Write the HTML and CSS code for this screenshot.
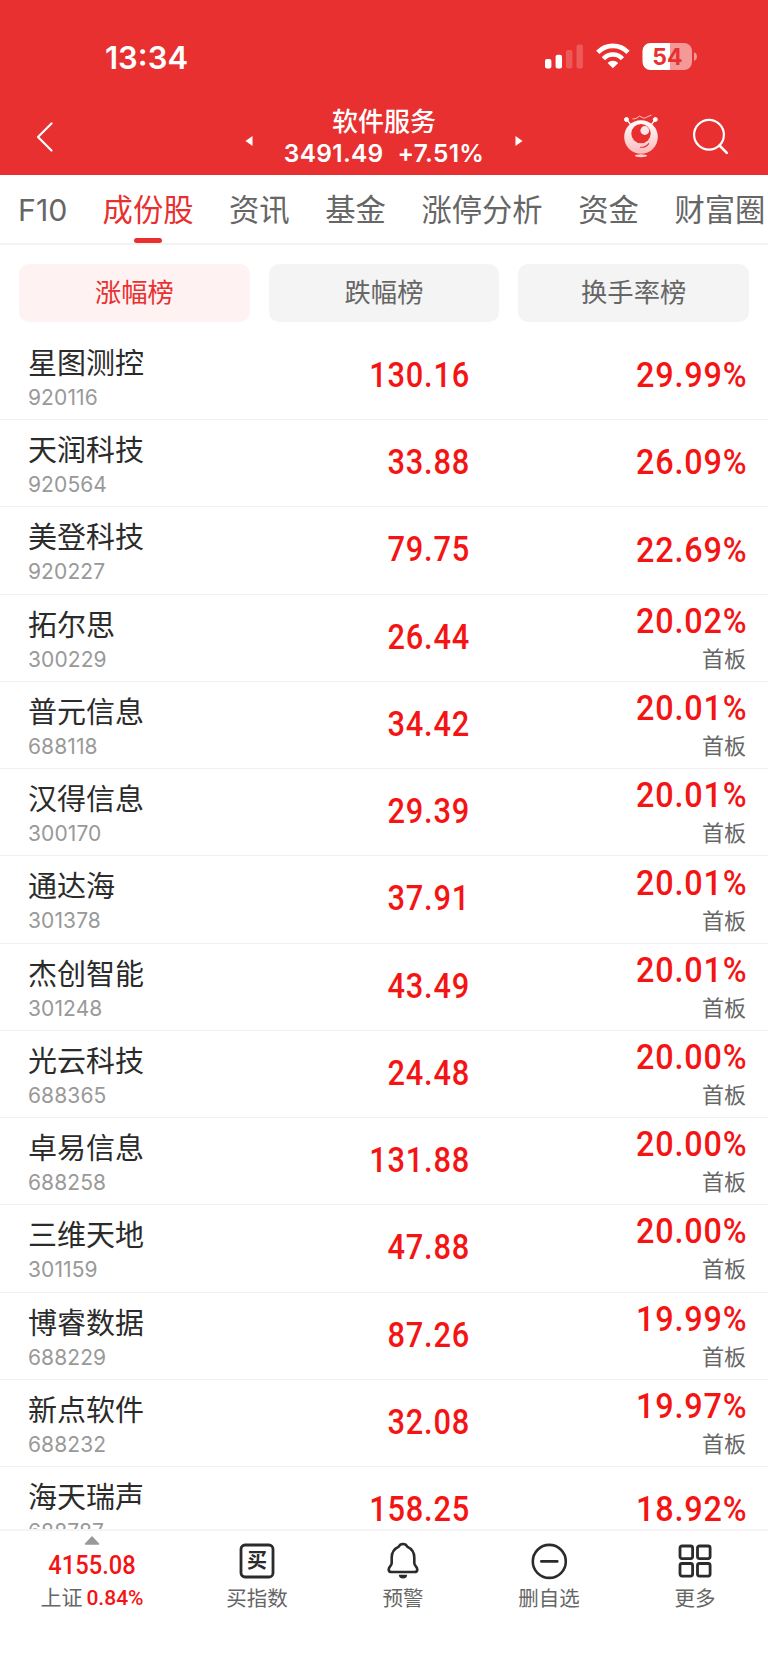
FILE: index.html
```
<!DOCTYPE html>
<html lang="zh-CN">
<head>
<meta charset="utf-8">
<title>软件服务</title>
<link rel="stylesheet" href="styles.css">
</head>
<body>
<div class="app">
  <header class="header">
    <div class="status">
      <span class="clock">13:34</span>
      <svg class="status-icons" width="154" height="30" viewBox="0 0 154 30">
        <rect x="1" y="17" width="6.4" height="9.4" rx="2" fill="#fff"/>
        <rect x="11.6" y="12.8" width="6.4" height="13.6" rx="2" fill="#fff"/>
        <rect x="22" y="8" width="6.4" height="18.4" rx="2" fill="#fff" opacity=".2"/>
        <rect x="32.5" y="2.6" width="6.4" height="23.8" rx="2" fill="#fff" opacity=".2"/>
        <g fill="none" stroke="#fff" stroke-width="4.6">
          <path d="M53.800 10.300a21 21 0 0 1 30.200 0"/>
          <path d="M59.400 16.700a13 13 0 0 1 19 0"/>
        </g>
        <path d="M68.900 26.300 63.600 21a7.600 7.600 0 0 1 10.600 0z" fill="#fff"/>
        <path d="M108 1h-1.5a8 8 0 0 0-8 8v11a8 8 0 0 0 8 8H126V1z" fill="#fff"/>
        <path d="M126 1h14a8 8 0 0 1 8 8v11a8 8 0 0 1-8 8h-14z" fill="#fff" opacity=".5"/>
        <path d="M150 10.3a4.6 4.6 0 0 1 0 8.6z" fill="#fff" opacity=".5"/>
        <text class="battery" x="123.500" y="22.700" text-anchor="middle">54</text>
      </svg>
    </div>
    <div class="nav">
      <svg class="back" width="20" height="32" viewBox="0 0 20 32"><path d="M16.500 2.500 3 16l13.500 13.500" fill="none" stroke="#fff" stroke-width="2.200" stroke-linecap="round" stroke-linejoin="round"/></svg>
      <svg class="prev" width="8" height="12" viewBox="0 0 8 12"><path d="M7.500 1v10L.5 6z" fill="#fff"/></svg>
      <div class="title">
        <div class="title-name">软件服务</div>
        <div class="title-quote"><span>3491.49</span><span>+7.51%</span></div>
      </div>
      <svg class="next" width="8" height="12" viewBox="0 0 8 12"><path d="M.5 1v10l7-5z" fill="#fff"/></svg>
      <svg class="mascot" width="36" height="44" viewBox="0 0 36 44">
        <defs><linearGradient id="skin" x1="0" y1="0" x2="0" y2="1"><stop offset="0" stop-color="#fff"/><stop offset="1" stop-color="#fdb9bc"/></linearGradient></defs>
        <g stroke="#fff" fill="#fff"><path d="M4 6l4 5M32 6l-4 5" stroke-width="1.300"/><circle cx="3.500" cy="5.500" r="2"/><circle cx="32.300" cy="5.500" r="2"/></g>
        <path d="M9.500 5l3.500-.5 3.500-2.500 4.500 2.300 7.500-3.300" fill="none" stroke="#fbb" stroke-width="1"/>
        <circle cx="18" cy="23" r="16.800" fill="url(#skin)"/>
        <circle cx="18" cy="19.600" r="9.700" fill="#e83030"/>
        <circle cx="21.800" cy="16.500" r="4.400" fill="#ffe6e6"/>
        <path d="M17.500 33.200q5 .8 8.200-3.600" fill="none" stroke="#e83030" stroke-width="1.100" stroke-linecap="round"/>
        <ellipse cx="18" cy="41.700" rx="6.200" ry="1.500" fill="#ffd0d0"/>
      </svg>
      <svg class="search" width="38" height="38" viewBox="0 0 38 38"><circle cx="17" cy="16.700" r="14.900" fill="none" stroke="#fff" stroke-width="2.200"/><path d="M27.500 27.500l7.300 7.300" stroke="#fff" stroke-width="2.600" stroke-linecap="round"/></svg>
    </div>
  </header>

  <nav class="tabs">
    <span class="tab tab-latin">F10</span>
    <span class="tab tab-active">成份股</span>
    <span class="tab">资讯</span>
    <span class="tab">基金</span>
    <span class="tab">涨停分析</span>
    <span class="tab">资金</span>
    <span class="tab">财富圈</span>
  </nav>

  <div class="filters">
    <div class="filter filter-active">涨幅榜</div>
    <div class="filter">跌幅榜</div>
    <div class="filter">换手率榜</div>
  </div>

  <main class="list">
    <div class="row"><div class="stock"><div class="name">星图测控</div><div class="code">920116</div></div><div class="price">130.16</div><div class="change"><div class="pct">29.99%</div></div></div>
    <div class="row"><div class="stock"><div class="name">天润科技</div><div class="code">920564</div></div><div class="price">33.88</div><div class="change"><div class="pct">26.09%</div></div></div>
    <div class="row"><div class="stock"><div class="name">美登科技</div><div class="code">920227</div></div><div class="price">79.75</div><div class="change"><div class="pct">22.69%</div></div></div>
    <div class="row"><div class="stock"><div class="name">拓尔思</div><div class="code">300229</div></div><div class="price">26.44</div><div class="change"><div class="pct">20.02%</div><div class="tag">首板</div></div></div>
    <div class="row"><div class="stock"><div class="name">普元信息</div><div class="code">688118</div></div><div class="price">34.42</div><div class="change"><div class="pct">20.01%</div><div class="tag">首板</div></div></div>
    <div class="row"><div class="stock"><div class="name">汉得信息</div><div class="code">300170</div></div><div class="price">29.39</div><div class="change"><div class="pct">20.01%</div><div class="tag">首板</div></div></div>
    <div class="row"><div class="stock"><div class="name">通达海</div><div class="code">301378</div></div><div class="price">37.91</div><div class="change"><div class="pct">20.01%</div><div class="tag">首板</div></div></div>
    <div class="row"><div class="stock"><div class="name">杰创智能</div><div class="code">301248</div></div><div class="price">43.49</div><div class="change"><div class="pct">20.01%</div><div class="tag">首板</div></div></div>
    <div class="row"><div class="stock"><div class="name">光云科技</div><div class="code">688365</div></div><div class="price">24.48</div><div class="change"><div class="pct">20.00%</div><div class="tag">首板</div></div></div>
    <div class="row"><div class="stock"><div class="name">卓易信息</div><div class="code">688258</div></div><div class="price">131.88</div><div class="change"><div class="pct">20.00%</div><div class="tag">首板</div></div></div>
    <div class="row"><div class="stock"><div class="name">三维天地</div><div class="code">301159</div></div><div class="price">47.88</div><div class="change"><div class="pct">20.00%</div><div class="tag">首板</div></div></div>
    <div class="row"><div class="stock"><div class="name">博睿数据</div><div class="code">688229</div></div><div class="price">87.26</div><div class="change"><div class="pct">19.99%</div><div class="tag">首板</div></div></div>
    <div class="row"><div class="stock"><div class="name">新点软件</div><div class="code">688232</div></div><div class="price">32.08</div><div class="change"><div class="pct">19.97%</div><div class="tag">首板</div></div></div>
    <div class="row"><div class="stock"><div class="name">海天瑞声</div><div class="code">688787</div></div><div class="price">158.25</div><div class="change"><div class="pct">18.92%</div></div></div>
  </main>

  <footer class="bar">
    <div class="index">
      <svg width="16" height="9" viewBox="0 0 16 9"><path d="M8 1l6.500 7h-13z" fill="#999" stroke="#999" stroke-width="1.500" stroke-linejoin="round"/></svg>
      <div class="index-value">4155.08</div>
      <div class="index-line"><span>上证</span><span class="index-pct">0.84%</span></div>
    </div>
    <div class="action">
      <svg width="38" height="38" viewBox="0 0 38 38"><rect x="3" y="3" width="32" height="32" rx="4" fill="none" stroke="#2b2b2b" stroke-width="2.800"/><text class="buy" x="19" y="26" text-anchor="middle">买</text></svg>
      <span>买指数</span>
    </div>
    <div class="action">
      <svg width="38" height="38" viewBox="0 0 38 38"><path d="M19 2c-2.200 0-3.500 1-4.200 2.600C10.500 6.600 7.700 10.500 7.700 15.500V21c0 3-3 3.800-3 6.400 0 1.900 1.300 2.600 3 2.600h22.600c1.700 0 3-.7 3-2.600 0-2.600-3-3.400-3-6.400v-5.500c0-5-2.800-8.900-7.100-10.900C22.500 3 21.200 2 19 2z" fill="none" stroke="#2b2b2b" stroke-width="2.600" stroke-linejoin="round"/><path d="M14.800 32.800h8.400a4.200 3.600 0 0 1-8.400 0z" fill="#2b2b2b"/></svg>
      <span>预警</span>
    </div>
    <div class="action">
      <svg width="38" height="38" viewBox="0 0 38 38"><g fill="none" stroke="#2b2b2b" stroke-width="2.600" stroke-linecap="round"><circle cx="19.300" cy="19.400" r="16.500"/><path d="M11.300 19.400h16"/></g></svg>
      <span>删自选</span>
    </div>
    <div class="action">
      <svg width="38" height="38" viewBox="0 0 38 38"><g fill="none" stroke="#2b2b2b" stroke-width="2.800"><rect x="4" y="4" width="12.600" height="12.600" rx="2"/><rect x="21.500" y="4" width="12.600" height="12.600" rx="2"/><rect x="4" y="21.500" width="12.600" height="12.600" rx="2"/><rect x="21.500" y="21.500" width="12.600" height="12.600" rx="2"/></g></svg>
      <span>更多</span>
    </div>
  </footer>
</div>
</body>
</html>
```

FILE: styles.css
```
* { box-sizing: border-box; }
body {
  margin: 0;
  background: #fff;
  color: #2b2b2b;
  font-family: Inter, "Noto Sans CJK SC", sans-serif;
}
svg { display: block; flex: none; }
.app {
  display: flex;
  flex-direction: column;
  width: 768px;
  height: 1669px;
  overflow: hidden;
}

.header {
  flex: none;
  height: 175px;
  background: #e83030;
  color: #fff;
}
.status {
  display: flex;
  justify-content: space-between;
  height: 98px;
  padding: 42px 70px 0 105px;
}
.clock {
  font-size: 31px;
  font-weight: 600;
  line-height: 31px;
}
.battery {
  fill: #e83030;
  font-size: 23px;
  font-weight: 700;
}
.nav {
  display: flex;
  align-items: flex-start;
  padding-left: 35px;
}
.back { margin-top: 23px; }
.prev { margin: 37px 0 0 190px; }
.title {
  width: 262px;
  padding-top: 8px;
  text-align: center;
}
.title-name {
  font-size: 26px;
  font-weight: 500;
  line-height: 32px;
}
.title-quote {
  display: flex;
  justify-content: center;
  gap: 14px;
  font-size: 24.500px;
  font-weight: 600;
  letter-spacing: .3px;
  line-height: 31px;
}
.next { margin-top: 37px; }
.mascot { margin: 16px 0 0 100px; }
.search { margin: 20px 0 0 33px; }

.tabs {
  flex: none;
  display: flex;
  gap: 35.600px;
  height: 70px;
  padding-left: 17px;
  border-bottom: 2px solid #f3f3f3;
  color: #666;
  font-size: 30.300px;
  font-weight: 400;
  line-height: 71px;
  white-space: nowrap;
}
.tab { flex: none; }
.tab-latin { width: 50px; padding-left: 1px; }
.tab-active {
  display: flex;
  flex-direction: column;
  align-items: center;
  color: #e83030;
}
.tab-active::after {
  content: "";
  width: 28px;
  height: 5px;
  margin-top: -8px;
  border-radius: 3px;
  background: #e83030;
}

.filters {
  flex: none;
  display: grid;
  grid-template-columns: repeat(3, 1fr);
  gap: 19px;
  height: 88px;
  padding: 19px 19px 12px;
}
.filter {
  border-radius: 10px;
  background: #f4f4f4;
  color: #666;
  font-size: 26.300px;
  line-height: 58px;
  text-align: center;
}
.filter-active {
  background: #fff2f2;
  color: #e83030;
}

.list {
  flex: 1;
  min-height: 0;
  overflow: hidden;
}
.row {
  display: grid;
  grid-template-columns: 240px 200px 1fr;
  height: 87.240px;
  padding: 0 22px 0 28px;
  border-bottom: 1px solid #f2f2f2;
}
.stock { padding-top: 12px; }
.name {
  font-size: 29px;
  line-height: 38px;
}
.code {
  color: #999;
  font-size: 21px;
  letter-spacing: .1px;
  line-height: 30px;
}
.price, .pct {
  color: #f41414;
  font-family: Roboto, sans-serif;
  font-size: 35px;
  font-weight: 500;
  letter-spacing: .9px;
  text-align: right;
  transform: scaleX(.9);
  transform-origin: right;
}
.price {
  line-height: 86px;
  transform: translateX(2px) scaleX(.88);
}
.change {
  display: flex;
  flex-direction: column;
  justify-content: center;
}
.pct {
  line-height: 42px;
  transform: translateX(1.500px) scaleX(.925);
}
.tag {
  color: #666;
  font-size: 22px;
  line-height: 32px;
  text-align: right;
}

.bar {
  flex: none;
  display: grid;
  grid-template-columns: 184px repeat(4, 1fr);
  height: 140px;
  border-top: 2px solid #f4f4f4;
}
.index, .action {
  display: flex;
  flex-direction: column;
  align-items: center;
}
.index { padding-top: 5px; }
.index-value {
  color: #f41414;
  font-family: Roboto, sans-serif;
  font-size: 25.500px;
  font-weight: 500;
  line-height: 41px;
  transform: scaleX(.93);
}
.index-line {
  display: flex;
  gap: 4px;
  color: #666;
  font-size: 21px;
  line-height: 24px;
}
.index-pct {
  color: #f41414;
  font-family: Roboto, sans-serif;
  font-weight: 500;
}
.action {
  padding-top: 11px;
  color: #666;
  font-size: 20.500px;
  line-height: 37px;
}
.buy {
  fill: #2b2b2b;
  font-size: 20px;
  font-weight: 700;
}
```
